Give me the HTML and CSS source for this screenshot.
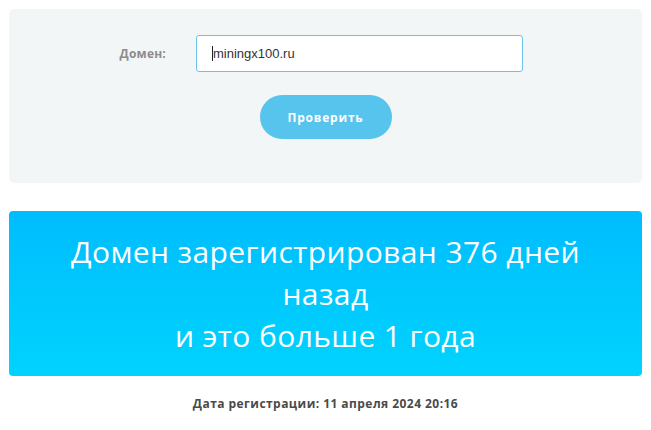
FILE: index.html
```html
<!DOCTYPE html>
<html lang="ru">
<head>
<meta charset="utf-8">
<title>Проверка возраста домена</title>
<link rel="stylesheet" href="styles.css">
</head>
<body>
<div class="page">
  <form class="panel">
    <div class="field">
      <label class="label" for="domain">Домен:</label>
      <div class="input"><span class="caret"></span>miningx100.ru</div>
    </div>
    <button class="btn" type="button">Проверить</button>
  </form>
  <div class="result">Домен зарегистрирован 376 дней<br>назад<br>и это больше 1 года</div>
  <p class="date">Дата регистрации: 11 апреля 2024 20:16</p>
</div>
</body>
</html>
```
FILE: styles.css
```css
html, body {
  margin: 0;
  padding: 0;
  background: #ffffff;
}
.page {
  padding: 9px;
  font-family: "Open Sans", "Liberation Sans", sans-serif;
}
.panel {
  background: #f3f6f7;
  border-radius: 5px;
  height: 174px;
  box-sizing: border-box;
  padding-top: 26px;
  display: flex;
  flex-direction: column;
  align-items: center;
  margin: 0;
}
.field {
  display: grid;
  grid-template-columns: 157px 327px;
  column-gap: 30px;
  align-items: center;
  align-self: flex-start;
}
.label {
  text-align: right;
  font-size: 12px;
  font-weight: 700;
  color: #8c8c8c;
  letter-spacing: 0.2px;
}
.input {
  box-sizing: border-box;
  height: 37px;
  border: 1px solid #6cc2e8;
  border-radius: 3px;
  background: #ffffff;
  display: flex;
  align-items: center;
  padding-left: 15px;
  font-family: "Liberation Sans", Arial, sans-serif;
  font-size: 13px;
  color: #333333;
}
.caret {
  width: 1px;
  height: 15px;
  background: #222222;
}
.btn {
  margin-top: 23px;
  width: 132px;
  height: 44px;
  border: none;
  border-radius: 22px;
  background: #56c4ec;
  color: #ffffff;
  font-family: "Open Sans", "Liberation Sans", sans-serif;
  font-size: 12px;
  font-weight: 700;
  letter-spacing: 0.8px;
  padding: 0;
}
.result {
  margin-top: 28px;
  height: 165px;
  box-sizing: border-box;
  padding: 20px 10px 19px;
  border-radius: 4px;
  background: linear-gradient(180deg, #00bdfd 0%, #00d3fe 100%);
  color: #ffffff;
  text-align: center;
  font-size: 30px;
  line-height: 42px;
  font-weight: 400;
  letter-spacing: 0.4px;
}
.date {
  margin: 20px 0 0;
  text-align: center;
  font-size: 12px;
  line-height: 16px;
  font-weight: 700;
  color: #4a4a4a;
  letter-spacing: 0.45px;
}
```
